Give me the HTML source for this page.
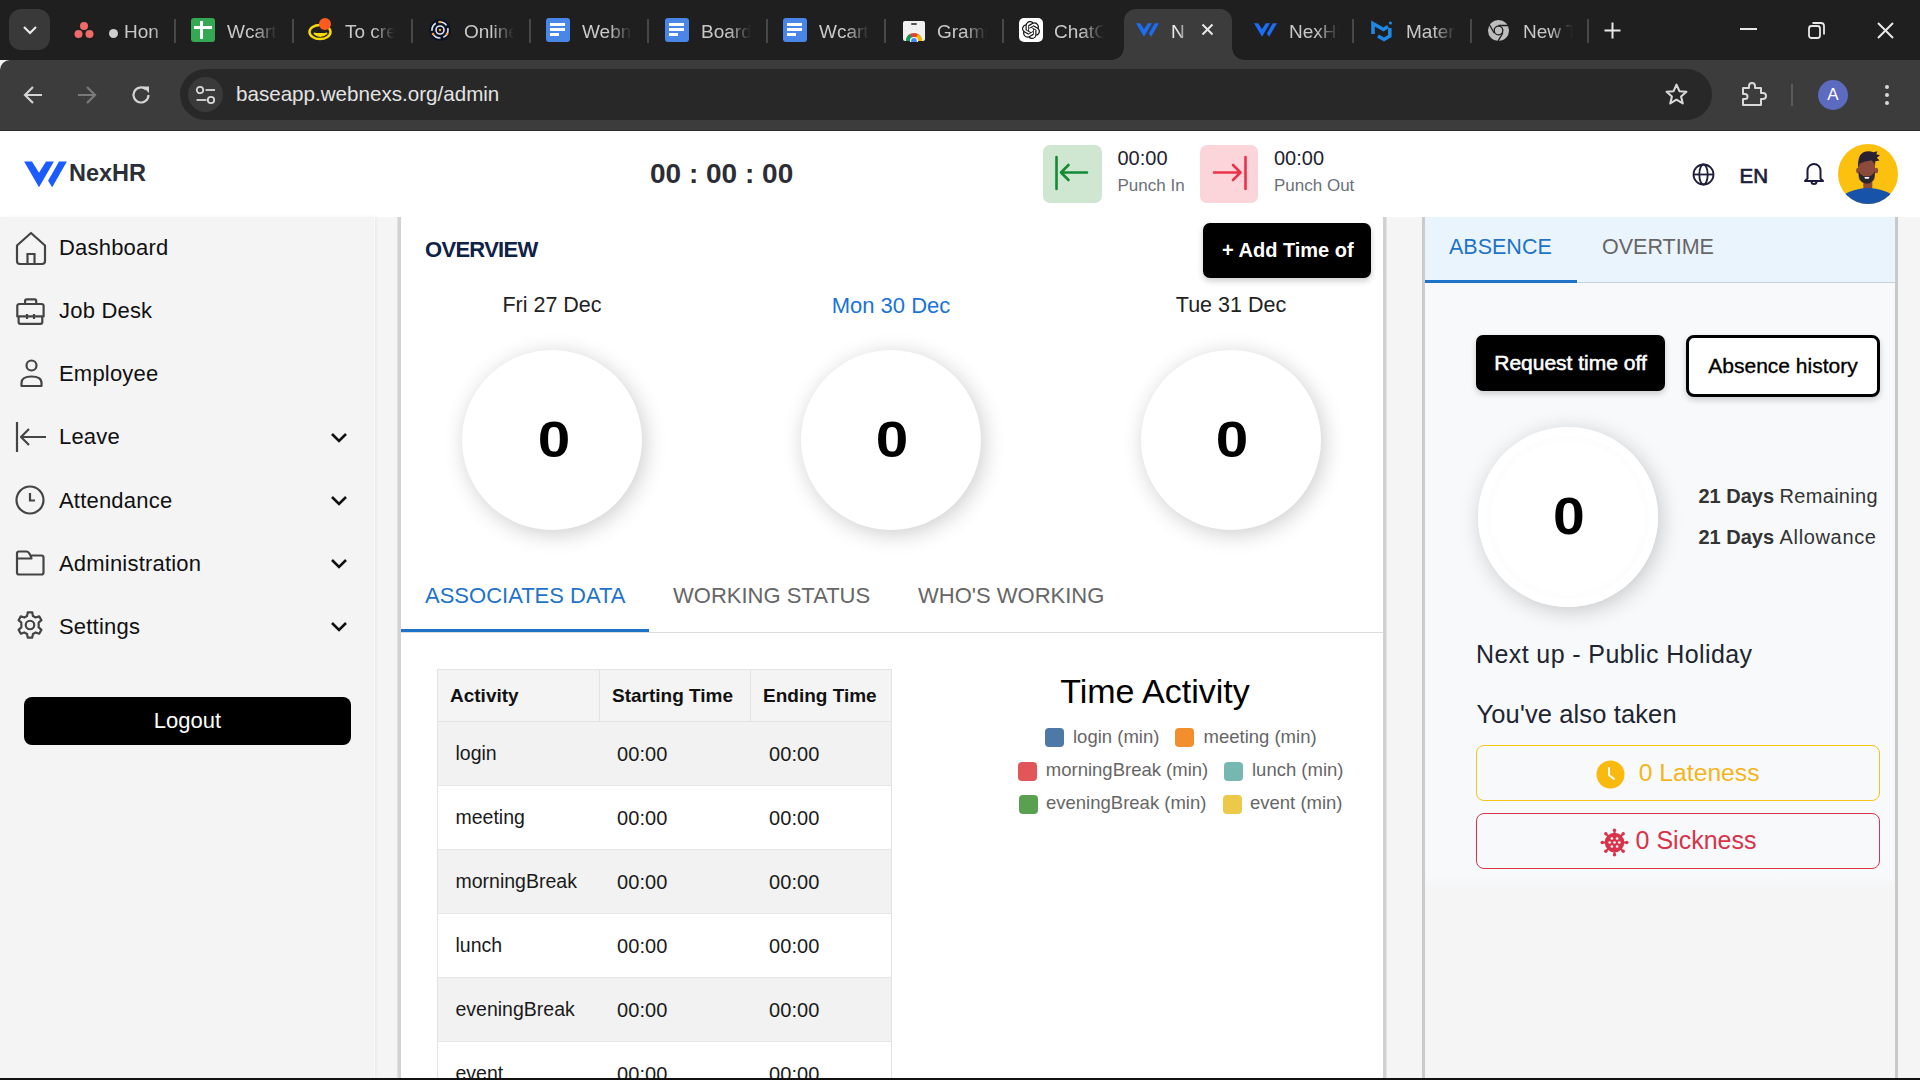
<!DOCTYPE html>
<html><head><meta charset="utf-8">
<style>
*{box-sizing:border-box;margin:0;padding:0}
html,body{width:1920px;height:1080px;overflow:hidden;background:#f5f5f5;font-family:"Liberation Sans",sans-serif}
.abs{position:absolute}
#tabstrip{position:absolute;left:0;top:0;width:1920px;height:60px;background:#1f1f1f}
#toolbar{position:absolute;left:0;top:60px;width:1920px;height:71px;background:#3c3c3c;border-top-left-radius:10px;border-bottom:1px solid #2a2a2a}
.tabt{position:absolute;top:20px;font-size:19px;color:#c8c8c8;white-space:nowrap;overflow:hidden;line-height:24px;-webkit-mask-image:linear-gradient(90deg,#000 55%,transparent 100%)}
.sep{position:absolute;top:19px;width:2px;height:24px;background:#474747}
.fav{position:absolute;top:19px;width:22px;height:22px}
#omni{position:absolute;left:180px;top:69px;width:1532px;height:51px;background:#282828;border-radius:26px}
#app{position:absolute;left:0;top:131px;width:1920px;height:949px}
#header{position:absolute;left:0;top:0;width:1920px;height:86px;background:#fff}
#sidebar{position:absolute;left:0;top:86px;width:375px;height:863px;background:#f4f4f4}
.nav{position:absolute;left:0;height:40px;width:375px}
.nav .t{position:absolute;left:59px;top:6px;font-size:22px;color:#111;line-height:28px}
.nav svg{position:absolute;left:14px;top:4px}
.nav .chev{position:absolute;left:328px;top:10px}
#main{position:absolute;left:400px;top:86px;width:985px;height:863px;background:#fff;border-left:1px solid #ddd;border-right:2px solid #ccc}
#rpanel{position:absolute;left:1423px;top:86px;width:474px;height:863px;background:#f7f9fa;border-left:3px solid #c9c9c9;border-right:3px solid #c9c9c9}
.doc{top:18px;width:24px;height:24px;background:#4a86e8;border-radius:3px;background-image:linear-gradient(#fff,#fff),linear-gradient(#fff,#fff),linear-gradient(#fff,#fff);background-size:15px 3px,15px 3px,9px 3px;background-position:4px 5px,4px 10px,4px 15px;background-repeat:no-repeat}
.tx{position:absolute;white-space:nowrap;line-height:1}
.nv{left:59px;font-size:22px;color:#111;letter-spacing:0.2px}
.chev{left:330px}
.circ{position:absolute;width:180px;height:180px;border-radius:50%;background:#fff;box-shadow:3px 4px 22px rgba(0,0,0,0.2)}
.big0{width:200px;text-align:center;top:414.5px;font-size:50px;font-weight:bold;color:#000;transform:scaleX(1.17)}
.th{top:685.8px;font-size:19px;font-weight:bold;color:#111}
.td{font-size:19.5px;color:#1a1a1a}
.tm{font-size:20px;letter-spacing:0.1px}
.lg{position:absolute;width:19px;height:19px;border-radius:4px}
.lt{font-size:18.5px;color:#666;margin-top:1px}
#header{position:absolute;left:0;top:131px;width:1920px;height:86px;background:#fff}
#bottombar{position:absolute;left:0;top:1078px;width:1920px;height:2px;background:#111}
</style></head><body>
<div id="tabstrip">
  <div class="abs" style="left:9px;top:9px;width:41px;height:41px;background:#393939;border-radius:12px"></div>
  <svg class="abs" style="left:22px;top:23px" width="16" height="14" viewBox="0 0 16 14"><path d="M2 4 L8 10 L14 4" fill="none" stroke="#e8e8e8" stroke-width="2.2"/></svg>
  <!-- tab1 asana -->
  <svg class="abs" style="left:74px;top:21px" width="20" height="18" viewBox="0 0 20 18"><circle cx="10" cy="5" r="4" fill="#f06a6a"/><circle cx="4.5" cy="13" r="4" fill="#f06a6a"/><circle cx="15.5" cy="13" r="4" fill="#f06a6a"/></svg>
  <div class="abs" style="left:109px;top:29px;width:9px;height:9px;border-radius:50%;background:#cfcfcf"></div>
  <div class="tabt" style="left:124px;width:50px">Hon</div>
  <div class="sep" style="left:174px"></div>
  <!-- tab2 sheets -->
  <div class="abs" style="left:191px;top:18px;width:24px;height:24px;background:#34a853;border-radius:3px"></div>
  <div class="abs" style="left:194px;top:26px;width:18px;height:3px;background:#fff"></div>
  <div class="abs" style="left:200px;top:21px;width:3px;height:18px;background:#fff"></div>
  <div class="tabt" style="left:227px;width:50px">Wcart</div>
  <div class="sep" style="left:292px"></div>
  <!-- tab3 -->
  <svg class="abs" style="left:308px;top:17px" width="27" height="24" viewBox="0 0 27 24"><ellipse cx="12" cy="15" rx="10.5" ry="7" fill="none" stroke="#f5d90a" stroke-width="2.5"/><path d="M6 16 Q12 22 19 16" fill="#f5d90a" stroke="#f5d90a" stroke-width="2"/><circle cx="17" cy="7" r="6" fill="#ff5a1f"/></svg>
  <div class="tabt" style="left:345px;width:50px">To cre</div>
  <div class="sep" style="left:411px"></div>
  <!-- tab4 -->
  <svg class="abs" style="left:428px;top:18px" width="24" height="24" viewBox="0 0 24 24"><circle cx="12" cy="12" r="11" fill="#0e1424"/><circle cx="12" cy="12" r="8" fill="none" stroke="#dfe6f5" stroke-width="1.6" stroke-dasharray="9 3"/><circle cx="12" cy="12" r="4" fill="none" stroke="#dfe6f5" stroke-width="1.6"/><circle cx="12" cy="12" r="1.3" fill="#f29b38"/><circle cx="12" cy="4" r="1.3" fill="#f29b38"/><circle cx="5" cy="16" r="1.3" fill="#f29b38"/><circle cx="19" cy="16" r="1.3" fill="#f29b38"/></svg>
  <div class="tabt" style="left:464px;width:50px">Online</div>
  <div class="sep" style="left:529px"></div>
  <!-- tab5 docs -->
  <div class="abs doc" style="left:546px"></div>
  <div class="tabt" style="left:582px;width:50px">Webnexs</div>
  <div class="sep" style="left:647px"></div>
  <div class="abs doc" style="left:665px"></div>
  <div class="tabt" style="left:701px;width:50px">Board</div>
  <div class="sep" style="left:766px"></div>
  <div class="abs doc" style="left:783px"></div>
  <div class="tabt" style="left:819px;width:50px">Wcart</div>
  <div class="sep" style="left:884px"></div>
  <!-- tab8 web store -->
  <svg class="abs" style="left:902px;top:18px" width="24" height="24" viewBox="0 0 24 24"><rect x="1" y="3" width="22" height="20" rx="2" fill="#f1f1f1"/><rect x="9" y="5" width="6" height="2" rx="1" fill="#555"/><path d="M4 23 A8 8 0 0 1 20 23 Z" fill="#db4437"/><path d="M4 23 A8 8 0 0 1 8 16 L12 23Z" fill="#0f9d58"/><path d="M20 23 A8 8 0 0 0 16 16 L12 23Z" fill="#f4b400"/><circle cx="12" cy="23" r="3.5" fill="#4285f4" stroke="#fff" stroke-width="1.2"/></svg>
  <div class="tabt" style="left:937px;width:50px">Grammarly</div>
  <div class="sep" style="left:1002px"></div>
  <!-- tab9 chatgpt -->
  <div class="abs" style="left:1019px;top:18px;width:24px;height:24px;background:#fff;border-radius:5px"></div>
  <svg class="abs" style="left:1022px;top:21px" width="18" height="18" viewBox="0 0 24 24"><path d="M22.2819 9.8211a5.9847 5.9847 0 0 0-.5157-4.9108 6.0462 6.0462 0 0 0-6.5098-2.9A6.0651 6.0651 0 0 0 4.9807 4.1818a5.9847 5.9847 0 0 0-3.9977 2.9 6.0462 6.0462 0 0 0 .7427 7.0966 5.98 5.98 0 0 0 .511 4.9107 6.051 6.051 0 0 0 6.5146 2.9001A5.9847 5.9847 0 0 0 13.2599 24a6.0557 6.0557 0 0 0 5.7718-4.2058 5.9894 5.9894 0 0 0 3.9977-2.9001 6.0557 6.0557 0 0 0-.7475-7.0729zm-9.022 12.6081a4.4755 4.4755 0 0 1-2.8764-1.0408l.1419-.0804 4.7783-2.7582a.7948.7948 0 0 0 .3927-.6813v-6.7369l2.02 1.1686a.071.071 0 0 1 .038.052v5.5826a4.504 4.504 0 0 1-4.4945 4.4944zm-9.6607-4.1254a4.4708 4.4708 0 0 1-.5346-3.0137l.142.0852 4.783 2.7582a.7712.7712 0 0 0 .7806 0l5.8428-3.3685v2.3324a.0804.0804 0 0 1-.0332.0615L9.74 19.9502a4.4992 4.4992 0 0 1-6.1408-1.6464zM2.3408 7.8956a4.485 4.485 0 0 1 2.3655-1.9728V11.6a.7664.7664 0 0 0 .3879.6765l5.8144 3.3543-2.0201 1.1685a.0757.0757 0 0 1-.071 0l-4.8303-2.7865A4.504 4.504 0 0 1 2.3408 7.872zm16.5963 3.8558L13.1038 8.364 15.1192 7.2a.0757.0757 0 0 1 .071 0l4.8303 2.7913a4.4944 4.4944 0 0 1-.6765 8.1042v-5.6772a.79.79 0 0 0-.407-.667zm2.0107-3.0231l-.142-.0852-4.7735-2.7818a.7759.7759 0 0 0-.7854 0L9.409 9.2297V6.8974a.0662.0662 0 0 1 .0284-.0615l4.8303-2.7866a4.4992 4.4992 0 0 1 6.6802 4.66zM8.3065 12.863l-2.02-1.1638a.0804.0804 0 0 1-.038-.0567V6.0742a4.4992 4.4992 0 0 1 7.3757-3.4537l-.142.0805L8.704 5.459a.7948.7948 0 0 0-.3927.6813zm1.0976-2.3654l2.602-1.4998 2.6069 1.4998v2.9994l-2.5974 1.4997-2.6067-1.4997Z" fill="#111"/></svg>
  <div class="tabt" style="left:1054px;width:50px">ChatGPT</div>
  <!-- active tab -->
  <div class="abs" style="left:1124px;top:9px;width:108px;height:51px;background:#3c3c3c;border-radius:12px 12px 0 0"></div>
  <div class="abs" style="left:1112px;top:48px;width:12px;height:12px;background:radial-gradient(circle at 0 0,#1f1f1f 11.5px,#3c3c3c 12px)"></div>
  <div class="abs" style="left:1232px;top:48px;width:12px;height:12px;background:radial-gradient(circle at 100% 0,#1f1f1f 11.5px,#3c3c3c 12px)"></div>
  <svg class="abs wlogo" style="left:1136.4px;top:23.3px" width="23" height="14" viewBox="4 6.5 43 25.7"><path d="M4.1 6.5 L12 6.5 L19 17.8 L26 6.5 L33.9 6.5 L19 32.2 Z" fill="#1b6ef3"/><path d="M39 6.5 L46.9 6.5 L32.2 32.2 L28.1 25.7 Z" fill="#1b6ef3"/></svg>
  <div class="tabt" style="left:1171px;width:16px;color:#e8e8e8">N</div>
  <svg class="abs" style="left:1201px;top:23px" width="13" height="13" viewBox="0 0 13 13"><path d="M1.5 1.5 L11.5 11.5 M11.5 1.5 L1.5 11.5" stroke="#e8e8e8" stroke-width="2"/></svg>
  <!-- tab11 -->
  <svg class="abs wlogo" style="left:1253.5px;top:23.3px" width="23" height="14" viewBox="4 6.5 43 25.7"><path d="M4.1 6.5 L12 6.5 L19 17.8 L26 6.5 L33.9 6.5 L19 32.2 Z" fill="#1b6ef3"/><path d="M39 6.5 L46.9 6.5 L32.2 32.2 L28.1 25.7 Z" fill="#1b6ef3"/></svg>
  <div class="tabt" style="left:1289px;width:50px">NexHR</div>
  <div class="sep" style="left:1352px"></div>
  <!-- tab12 MUI -->
  <svg class="abs" style="left:1368px;top:18px" width="26" height="24" viewBox="0 0 26 24"><path d="M5 16 V5.5 L15.5 11.5 L20 8.5 M21.8 10 V18 L16 21.5 L10 18" fill="none" stroke="#1e88e5" stroke-width="3.6" stroke-linejoin="miter"/><circle cx="22.4" cy="5" r="1.6" fill="#1e88e5"/></svg>
  <div class="tabt" style="left:1406px;width:50px">Material</div>
  <div class="sep" style="left:1470px"></div>
  <!-- tab13 chrome -->
  <svg class="abs" style="left:1487px;top:19px" width="23" height="23" viewBox="0 0 24 24"><circle cx="12" cy="12" r="11" fill="#bdbdbd"/><circle cx="12" cy="12" r="5.2" fill="#1f1f1f"/><circle cx="12" cy="12" r="3.8" fill="#bdbdbd"/><path d="M12 6.8 H22 M7.5 14.6 L2.5 6 M16.5 14.6 L11.5 23" stroke="#1f1f1f" stroke-width="1.4"/></svg>
  <div class="tabt" style="left:1523px;width:50px">New Tab</div>
  <div class="sep" style="left:1587px"></div>
  <svg class="abs" style="left:1604px;top:22px" width="17" height="17" viewBox="0 0 17 17"><path d="M8.5 0.5 V16.5 M0.5 8.5 H16.5" stroke="#e8e8e8" stroke-width="2"/></svg>
  <div class="abs" style="left:1740px;top:28px;width:17px;height:2px;background:#e8e8e8"></div>
  <svg class="abs" style="left:1808px;top:22px" width="17" height="17" viewBox="0 0 17 17"><rect x="1" y="4" width="11" height="12" rx="2.5" fill="none" stroke="#e8e8e8" stroke-width="1.8"/><path d="M4.5 1 H13 Q16 1 16 4 V12.5" fill="none" stroke="#e8e8e8" stroke-width="1.8"/></svg>
  <svg class="abs" style="left:1877px;top:22px" width="17" height="17" viewBox="0 0 17 17"><path d="M1 1 L16 16 M16 1 L1 16" stroke="#e8e8e8" stroke-width="2"/></svg>
</div>
<div id="toolbar">
  <svg class="abs" style="left:23px;top:25px" width="20" height="20" viewBox="0 0 20 20"><path d="M19 10 H2.5 M10 2 L2 10 L10 18" fill="none" stroke="#d4d4d4" stroke-width="2.2"/></svg>
  <svg class="abs" style="left:77px;top:25px" width="20" height="20" viewBox="0 0 20 20"><path d="M1 10 H17.5 M10 2 L18 10 L10 18" fill="none" stroke="#7a7a7a" stroke-width="2.2"/></svg>
  <svg class="abs" style="left:131px;top:25px" width="20" height="20" viewBox="0 0 20 20"><path d="M17.5 10 A7.5 7.5 0 1 1 15 4.4" fill="none" stroke="#d4d4d4" stroke-width="2.2"/><path d="M11.5 1.5 H18 V8 Z" fill="#d4d4d4"/></svg>
</div>
<div id="omni">
  <div class="abs" style="left:8px;top:8px;width:35px;height:35px;border-radius:50%;background:#3a3a3a"></div>
  <svg class="abs" style="left:15px;top:16px" width="22" height="20" viewBox="0 0 22 20"><circle cx="5" cy="5" r="3.2" fill="none" stroke="#d8d8d8" stroke-width="1.8"/><path d="M10.5 5 H20" stroke="#d8d8d8" stroke-width="1.8"/><circle cx="16" cy="15" r="3.2" fill="none" stroke="#d8d8d8" stroke-width="1.8"/><path d="M1.5 15 H11.5" stroke="#d8d8d8" stroke-width="1.8"/></svg>
  <div class="abs" style="left:56px;top:12px;font-size:20.6px;color:#e3e3e3;line-height:26px;white-space:nowrap">baseapp.webnexs.org/admin</div>
  <svg class="abs" style="left:1484px;top:13px" width="25" height="25" viewBox="0 0 24 24"><path d="M12 2.5 L14.8 8.8 L21.5 9.4 L16.4 13.9 L18 20.6 L12 17 L6 20.6 L7.6 13.9 L2.5 9.4 L9.2 8.8 Z" fill="none" stroke="#d8d8d8" stroke-width="2" stroke-linejoin="round"/></svg>
</div>
<svg class="abs" style="left:1741px;top:81px" width="27" height="26" viewBox="0 0 27 26"><path d="M2 7 H8 V5 A3 3 0 0 1 14 5 V7 H20 V12 H22 A3 3 0 0 1 22 18 H20 V24 H2 V18 H4 A2.5 2.5 0 0 0 4 13 H2 Z" fill="none" stroke="#d8d8d8" stroke-width="2" stroke-linejoin="round"/></svg>
<div class="abs" style="left:1791px;top:84px;width:2px;height:22px;background:#5a5a5a"></div>
<div class="abs" style="left:1818px;top:80px;width:30px;height:30px;border-radius:50%;background:#5c6bc0;color:#fff;font-size:17px;text-align:center;line-height:30px">A</div>
<div class="abs" style="left:1885px;top:85px;width:4px;height:4px;border-radius:50%;background:#d8d8d8"></div>
<div class="abs" style="left:1885px;top:93px;width:4px;height:4px;border-radius:50%;background:#d8d8d8"></div>
<div class="abs" style="left:1885px;top:101px;width:4px;height:4px;border-radius:50%;background:#d8d8d8"></div>
<div id="header"></div>
<!-- logo -->
<svg class="abs" style="left:20px;top:155px" width="50" height="37" viewBox="0 0 50 37"><path d="M4.1 6.5 L12 6.5 L19 17.8 L26 6.5 L33.9 6.5 L19 32.2 Z" fill="#1a5cff"/><path d="M39 6.5 L46.9 6.5 L32.2 32.2 L28.1 25.7 Z" fill="#1a5cff"/></svg>
<div class="tx" style="left:69px;top:162px;font-size:23.5px;font-weight:bold;color:#2b2f38">NexHR</div>
<div class="tx" style="left:650px;top:160.4px;font-size:28px;font-weight:bold;color:#2d2d35">00 : 00 : 00</div>
<!-- punch in -->
<div class="abs" style="left:1043px;top:145px;width:59px;height:58px;background:#cfe6d1;border-radius:7px"></div>
<svg class="abs" style="left:1043px;top:145px" width="59" height="58" viewBox="0 0 59 58"><path d="M13.5 12 V44 M18 27.5 H44 M25.5 20 L18 27.5 L25.5 35" fill="none" stroke="#138a36" stroke-width="2.6" stroke-linecap="round" stroke-linejoin="round"/></svg>
<div class="tx" style="left:1117.5px;top:147.7px;font-size:20px;color:#1f2330">00:00</div>
<div class="tx" style="left:1117.5px;top:177px;font-size:17px;color:#6b6f78">Punch In</div>
<!-- punch out -->
<div class="abs" style="left:1200px;top:145px;width:58px;height:58px;background:#fcd5da;border-radius:7px"></div>
<svg class="abs" style="left:1200px;top:145px" width="58" height="58" viewBox="0 0 58 58"><path d="M45.5 12 V44 M14 27.5 H40.5 M33 20 L40.5 27.5 L33 35" fill="none" stroke="#e8334a" stroke-width="2.6" stroke-linecap="round" stroke-linejoin="round"/></svg>
<div class="tx" style="left:1274px;top:147.7px;font-size:20px;color:#1f2330">00:00</div>
<div class="tx" style="left:1274px;top:177px;font-size:17px;color:#6b6f78">Punch Out</div>
<!-- globe, EN, bell, avatar -->
<svg class="abs" style="left:1692px;top:163px" width="23" height="23" viewBox="0 0 23 23"><g fill="none" stroke="#1e1e3c" stroke-width="1.8"><circle cx="11.5" cy="11.5" r="10"/><ellipse cx="11.5" cy="11.5" rx="4.2" ry="10"/><path d="M1.5 11.5 H21.5"/></g></svg>
<div class="tx" style="left:1739.6px;top:165.5px;font-size:20.5px;-webkit-text-stroke:0.7px #1d1d3a;color:#1d1d3a">EN</div>
<svg class="abs" style="left:1803px;top:161px" width="22" height="24" viewBox="0 0 22 24"><path d="M4.5 17.5 V9.5 A6.5 6.5 0 0 1 17.5 9.5 V17.5 L20 20 H2 Z" fill="none" stroke="#1c1a3a" stroke-width="2" stroke-linejoin="round"/><path d="M8.5 20.5 A2.5 2.5 0 0 0 13.5 20.5" fill="none" stroke="#1c1a3a" stroke-width="2"/></svg>
<svg class="abs" style="left:1838px;top:144px" width="60" height="60" viewBox="0 0 60 60"><defs><clipPath id="avc"><circle cx="30" cy="30" r="30"/></clipPath></defs><g clip-path="url(#avc)"><rect width="60" height="60" fill="#fcc10f"/><rect x="25.3" y="36" width="9" height="9" fill="#8b4a3a"/><path d="M4 60 V51.5 Q16.5 44 30 44 Q43.5 44 56 51.5 V60 Z" fill="#1753a8"/><ellipse cx="20" cy="26.5" rx="1.9" ry="2.7" fill="#8b4a3a"/><ellipse cx="38.3" cy="26.5" rx="1.9" ry="2.7" fill="#8b4a3a"/><path d="M20.5 22 Q20.5 15.5 28.7 15.5 Q37 15.5 37 22 V32 Q37 39 28.7 39 Q20.5 39 20.5 32 Z" fill="#8b4a3a"/><path d="M20.6 27.5 Q21 39.6 28.8 39.6 Q36.6 39.6 36.9 27.5 L35 30 Q33 32.6 28.8 32.6 Q24.5 32.6 22.5 30 Z" fill="#2a2630"/><path d="M26.3 33 H31.5 L30.7 34.8 H27.1 Z" fill="#fff"/><path d="M20.3 24.5 Q19 12 25 8.5 Q30 6 35.5 8.2 L39.5 7.2 L38.3 10.3 L42 11.3 L38.8 13.8 L41.5 16.5 L37.3 17.3 L37 22 Q36 17.5 33 16.5 Q27 16.8 21.8 19.5 Z" fill="#2a2233"/></g></svg>
<!-- sidebar -->
<div class="abs" style="left:0;top:217px;width:375px;height:863px;background:#f4f4f4;border-right:1px solid #fafafa;box-shadow:1px 0 3px rgba(0,0,0,0.06)"></div>
<svg class="abs" style="left:14px;top:230px" width="34" height="36" viewBox="0 0 34 36"><path d="M3 15.5 L17 3 L31 15.5 V31 Q31 34 28 34 H6 Q3 34 3 31 Z" fill="none" stroke="#444" stroke-width="2.2" stroke-linejoin="round"/><path d="M13.5 34 V24 H20.5 V34" fill="none" stroke="#444" stroke-width="2.2"/></svg>
<div class="tx nv" style="top:237.0px">Dashboard</div>
<svg class="abs" style="left:15px;top:297px" width="32" height="30" viewBox="0 0 32 30"><path d="M4.5 7 H26.5 Q28.6 7 28.6 9 V19.4 H2.3 V9 Q2.3 7 4.5 7 Z M3.6 19.4 V25 Q3.6 26.8 5.4 26.8 H25.5 Q27.3 26.8 27.3 25 V19.4 M10.1 7 V3.8 Q10.1 2.3 11.6 2.3 H19.7 Q21.2 2.3 21.2 3.8 V7 M12 17 V22 M19 17 V22" fill="none" stroke="#444" stroke-width="2.2" stroke-linejoin="round"/></svg>
<div class="tx nv" style="top:300.0px">Job Desk</div>
<svg class="abs" style="left:18px;top:358px" width="28" height="31" viewBox="0 0 28 31"><circle cx="13.5" cy="7.5" r="5" fill="none" stroke="#444" stroke-width="2.2"/><path d="M3.5 28 V25 Q3.5 18.5 13.5 18.5 Q23.5 18.5 23.5 25 V28 Z" fill="none" stroke="#444" stroke-width="2.2" stroke-linejoin="round"/></svg>
<div class="tx nv" style="top:363.0px">Employee</div>
<svg class="abs" style="left:14px;top:420px" width="34" height="34" viewBox="0 0 34 34"><path d="M3 2 V32 M7 17 H32 M15 9 L7 17 L15 25" fill="none" stroke="#444" stroke-width="2.2" stroke-linejoin="round"/></svg>
<div class="tx nv" style="top:425.8px">Leave</div>
<svg class="abs" style="left:14px;top:484px" width="32" height="32" viewBox="0 0 32 32"><circle cx="16" cy="16" r="13.5" fill="none" stroke="#444" stroke-width="2.2"/><path d="M16 9 V16.5 H21" fill="none" stroke="#444" stroke-width="2.2"/></svg>
<div class="tx nv" style="top:489.8px">Attendance</div>
<svg class="abs" style="left:15px;top:549px" width="32" height="28" viewBox="0 0 32 28"><path d="M2 4.5 Q2 2.5 4 2.5 H11.5 Q13 2.5 14 4 L15.5 6.5 H26.5 Q28.5 6.5 28.5 8.5 V23.5 Q28.5 25.5 26.5 25.5 H4 Q2 25.5 2 23.5 Z M2 9.5 H16.5 L15.5 6.5" fill="none" stroke="#444" stroke-width="2.2" stroke-linejoin="round"/></svg>
<div class="tx nv" style="top:552.8px">Administration</div>
<svg class="abs" style="left:14px;top:609px" width="32" height="32" viewBox="0 0 24 24"><path d="M10.3 2.5 H13.7 L14.2 5.2 L16.3 6.4 L18.9 5.5 L20.6 8.4 L18.5 10.2 V13.8 L20.6 15.6 L18.9 18.5 L16.3 17.6 L14.2 18.8 L13.7 21.5 H10.3 L9.8 18.8 L7.7 17.6 L5.1 18.5 L3.4 15.6 L5.5 13.8 V10.2 L3.4 8.4 L5.1 5.5 L7.7 6.4 L9.8 5.2 Z" fill="none" stroke="#444" stroke-width="1.65" stroke-linejoin="round"/><circle cx="12" cy="12" r="3.2" fill="none" stroke="#444" stroke-width="1.65"/></svg>
<div class="tx nv" style="top:615.8px">Settings</div>
<svg class="abs chev" style="top:432px" width="18" height="11" viewBox="0 0 18 11"><path d="M2 2 L9 9 L16 2" fill="none" stroke="#111" stroke-width="2.6"/></svg>
<svg class="abs chev" style="top:495px" width="18" height="11" viewBox="0 0 18 11"><path d="M2 2 L9 9 L16 2" fill="none" stroke="#111" stroke-width="2.6"/></svg>
<svg class="abs chev" style="top:558px" width="18" height="11" viewBox="0 0 18 11"><path d="M2 2 L9 9 L16 2" fill="none" stroke="#111" stroke-width="2.6"/></svg>
<svg class="abs chev" style="top:621px" width="18" height="11" viewBox="0 0 18 11"><path d="M2 2 L9 9 L16 2" fill="none" stroke="#111" stroke-width="2.6"/></svg>
<div class="abs" style="left:24px;top:697px;width:327px;height:48px;background:#000;border-radius:8px"></div>
<div class="tx" style="left:24px;width:327px;text-align:center;top:710.4px;font-size:22px;color:#fff">Logout</div>
<!-- main card -->
<div class="abs" style="left:397px;top:217px;width:4px;height:863px;background:linear-gradient(90deg,#e6e6e6,#d0d0d0 50%,#d3d3d3)"></div>
<div class="abs" style="left:401px;top:217px;width:982px;height:863px;background:#fff"></div>
<div class="abs" style="left:1383px;top:217px;width:4px;height:863px;background:linear-gradient(90deg,#d2d2d2,#cfcfcf 60%,#eeeeee)"></div>
<div class="tx" style="left:425px;top:238.6px;font-size:22px;letter-spacing:-0.7px;font-weight:bold;color:#0e2146">OVERVIEW</div>
<div class="abs" style="left:1203px;top:223px;width:168px;height:55px;background:#000;border-radius:7px;box-shadow:0 3px 6px rgba(0,0,0,0.2)"></div>
<div class="tx" style="left:1222px;top:240.1px;font-size:20px;font-weight:bold;color:#fff">+ Add Time of</div>
<div class="tx" style="left:452px;width:200px;text-align:center;top:295.2px;font-size:21.5px;color:#222">Fri 27 Dec</div>
<div class="tx" style="left:791px;width:200px;text-align:center;top:295.2px;font-size:22px;color:#1a73d9">Mon 30 Dec</div>
<div class="tx" style="left:1131px;width:200px;text-align:center;top:295.2px;font-size:21.5px;color:#222">Tue 31 Dec</div>
<div class="circ" style="left:462px;top:350px"></div>
<div class="circ" style="left:801px;top:350px"></div>
<div class="circ" style="left:1141px;top:350px"></div>
<div class="tx big0" style="left:453.5px">0</div>
<div class="tx big0" style="left:792px">0</div>
<div class="tx big0" style="left:1132px">0</div>
<!-- tabs -->
<div class="tx" style="left:425px;top:584.9px;font-size:22px;color:#1e73c8">ASSOCIATES DATA</div>
<div class="tx" style="left:673px;top:584.9px;font-size:22px;color:#666">WORKING STATUS</div>
<div class="tx" style="left:918px;top:584.9px;font-size:22px;color:#666">WHO'S WORKING</div>
<div class="abs" style="left:401px;top:632px;width:982px;height:1px;background:#dcdcdc"></div>
<div class="abs" style="left:401px;top:629px;width:248px;height:3px;background:#1e73c8"></div>
<!-- table -->
<div class="abs" style="left:437px;top:669px;width:455px;height:420px;border:1px solid #e3e3e3;overflow:hidden">
  <div class="abs" style="left:0;top:0;width:453px;height:52px;background:#f4f4f4;border-bottom:1px solid #e3e3e3"></div>
  <div class="abs" style="left:0;top:52px;width:453px;height:64px;background:#f2f2f2;border-bottom:1px solid #e6e6e6"></div>
  <div class="abs" style="left:0;top:116px;width:453px;height:64px;background:#fff;border-bottom:1px solid #e6e6e6"></div>
  <div class="abs" style="left:0;top:180px;width:453px;height:64px;background:#f2f2f2;border-bottom:1px solid #e6e6e6"></div>
  <div class="abs" style="left:0;top:244px;width:453px;height:64px;background:#fff;border-bottom:1px solid #e6e6e6"></div>
  <div class="abs" style="left:0;top:308px;width:453px;height:64px;background:#f2f2f2;border-bottom:1px solid #e6e6e6"></div>
  <div class="abs" style="left:0;top:372px;width:453px;height:64px;background:#fff"></div>
  <div class="abs" style="left:161px;top:0;width:1px;height:52px;background:#e3e3e3"></div>
  <div class="abs" style="left:312px;top:0;width:1px;height:52px;background:#e3e3e3"></div>
</div>
<div class="tx th" style="left:450px">Activity</div>
<div class="tx th" style="left:612px">Starting Time</div>
<div class="tx th" style="left:763px">Ending Time</div>
<div class="tx td" style="left:455.5px;top:743.9px">login</div><div class="tx td tm" style="left:617px;top:743.9px">00:00</div><div class="tx td tm" style="left:769px;top:743.9px">00:00</div>
<div class="tx td" style="left:455.5px;top:807.9px">meeting</div><div class="tx td tm" style="left:617px;top:807.9px">00:00</div><div class="tx td tm" style="left:769px;top:807.9px">00:00</div>
<div class="tx td" style="left:455.5px;top:871.9px">morningBreak</div><div class="tx td tm" style="left:617px;top:871.9px">00:00</div><div class="tx td tm" style="left:769px;top:871.9px">00:00</div>
<div class="tx td" style="left:455.5px;top:935.9px">lunch</div><div class="tx td tm" style="left:617px;top:935.9px">00:00</div><div class="tx td tm" style="left:769px;top:935.9px">00:00</div>
<div class="tx td" style="left:455.5px;top:999.9px">eveningBreak</div><div class="tx td tm" style="left:617px;top:999.9px">00:00</div><div class="tx td tm" style="left:769px;top:999.9px">00:00</div>
<div class="tx td" style="left:455.5px;top:1063.9px">event</div><div class="tx td tm" style="left:617px;top:1063.9px">00:00</div><div class="tx td tm" style="left:769px;top:1063.9px">00:00</div>
<!-- time activity -->
<div class="tx" style="left:1005px;width:300px;text-align:center;top:674px;font-size:34px;color:#000">Time Activity</div>
<div class="lg" style="left:1045px;top:728px;background:#4e79a7"></div><div class="tx lt" style="left:1073px;top:726.6px">login (min)</div>
<div class="lg" style="left:1175px;top:728px;background:#f28e2c"></div><div class="tx lt" style="left:1203.5px;top:726.6px">meeting (min)</div>
<div class="lg" style="left:1018px;top:761.5px;background:#e15759"></div><div class="tx lt" style="left:1045.8px;top:759.9px">morningBreak (min)</div>
<div class="lg" style="left:1224px;top:761.5px;background:#76b7b2"></div><div class="tx lt" style="left:1252px;top:759.9px">lunch (min)</div>
<div class="lg" style="left:1018.5px;top:794.5px;background:#59a14f"></div><div class="tx lt" style="left:1046px;top:792.6px">eveningBreak (min)</div>
<div class="lg" style="left:1223px;top:794.5px;background:#edc949"></div><div class="tx lt" style="left:1250px;top:792.6px">event (min)</div>
<!-- right panel -->
<div class="abs" style="left:1422px;top:217px;width:3px;height:863px;background:#cbcbcb"></div>
<div class="abs" style="left:1425px;top:217px;width:470px;height:863px;background:#f5f5f5"></div>
<div class="abs" style="left:1425px;top:217px;width:470px;height:672px;background:linear-gradient(180deg,#f7f9fb 0,#f7f9fb 659px,#f5f5f5 672px)"></div>
<div class="abs" style="left:1425px;top:217px;width:470px;height:66px;background:#eaf4fc;border-bottom:1px solid #c8d4dc"></div>
<div class="abs" style="left:1425px;top:280px;width:152px;height:3px;background:#1e73c8"></div>
<div class="abs" style="left:1895px;top:217px;width:3px;height:863px;background:#c9c9c9"></div>
<div class="tx" style="left:1449px;top:236.5px;font-size:21.5px;color:#1e73c8">ABSENCE</div>
<div class="tx" style="left:1602px;top:236.5px;font-size:21.5px;color:#666">OVERTIME</div>
<div class="abs" style="left:1476px;top:335px;width:189px;height:56px;background:#000;border-radius:7px;box-shadow:0 3px 6px rgba(0,0,0,0.18)"></div>
<div class="tx" style="left:1476px;width:189px;text-align:center;top:352.2px;font-size:21px;-webkit-text-stroke:0.55px #fff;color:#fff">Request time off</div>
<div class="abs" style="left:1686px;top:335px;width:194px;height:62px;background:#fff;border:3px solid #000;border-radius:8px;box-shadow:0 3px 6px rgba(0,0,0,0.18)"></div>
<div class="tx" style="left:1686px;width:194px;text-align:center;top:355.4px;font-size:21px;-webkit-text-stroke:0.35px #000;color:#000">Absence history</div>
<div class="circ" style="left:1478px;top:427px;box-shadow:3px 4px 22px rgba(0,0,0,0.2),inset 0 0 0 9px #fff,inset 0 0 14px 9px rgba(0,0,0,0.025)"></div>
<div class="tx" style="left:1469px;width:200px;text-align:center;top:490.6px;font-size:51px;font-weight:bold;color:#000;transform:scaleX(1.12)">0</div>
<div class="tx" style="left:1698.4px;top:486px;font-size:20px;color:#333"><b>21 Days</b> <span style="letter-spacing:0.3px">Remaining</span></div>
<div class="tx" style="left:1698.4px;top:526.7px;font-size:20px;color:#333"><b>21 Days</b> <span style="letter-spacing:0.65px">Allowance</span></div>
<div class="tx" style="left:1476px;top:641.8px;font-size:25px;letter-spacing:0.4px;color:#1e2530">Next up - Public Holiday</div>
<div class="tx" style="left:1476.5px;top:702.3px;font-size:25.5px;letter-spacing:0.12px;color:#1e2530">You've also taken</div>
<div class="abs" style="left:1476px;top:745px;width:404px;height:56px;border:1.5px solid #f5c518;border-radius:8px"></div>
<svg class="abs" style="left:1596px;top:760px" width="29" height="29" viewBox="0 0 29 29"><circle cx="14.5" cy="14.5" r="14" fill="#f9b90f"/><path d="M13 8 V15 L18 19" fill="none" stroke="#fff" stroke-width="2" stroke-linecap="round"/></svg>
<div class="tx" style="left:1638.75px;top:760.6px;font-size:24.7px;color:#f4b51c">0 Lateness</div>
<div class="abs" style="left:1476px;top:813px;width:404px;height:56px;border:1.5px solid #d9344a;border-radius:8px"></div>
<svg class="abs" style="left:1600px;top:828px" width="29" height="29" viewBox="0 0 29 29"><path d="M14.50 5.50 L14.50 2.20 M20.86 8.14 L23.20 5.80 M23.50 14.50 L26.80 14.50 M20.86 20.86 L23.20 23.20 M14.50 23.50 L14.50 26.80 M8.14 20.86 L5.80 23.20 M5.50 14.50 L2.20 14.50 M8.14 8.14 L5.80 5.80 " stroke="#d8334a" stroke-width="2"/><g fill="#d8334a"><circle cx="14.50" cy="2.20" r="1.7"/><circle cx="23.20" cy="5.80" r="1.7"/><circle cx="26.80" cy="14.50" r="1.7"/><circle cx="23.20" cy="23.20" r="1.7"/><circle cx="14.50" cy="26.80" r="1.7"/><circle cx="5.80" cy="23.20" r="1.7"/><circle cx="2.20" cy="14.50" r="1.7"/><circle cx="5.80" cy="5.80" r="1.7"/></g><circle cx="14.5" cy="14.5" r="9.8" fill="#d8334a"/><g fill="#f7f9fb"><circle cx="11.90" cy="10.50" r="1.35"/><circle cx="17.10" cy="10.50" r="1.35"/><circle cx="9.70" cy="14.50" r="1.35"/><circle cx="14.50" cy="14.50" r="1.35"/><circle cx="19.30" cy="14.50" r="1.35"/><circle cx="11.90" cy="18.50" r="1.35"/><circle cx="17.10" cy="18.50" r="1.35"/></g></svg>
<div class="tx" style="left:1635.6px;top:827.8px;font-size:25px;color:#d8334a">0 Sickness</div>
<div id="bottombar"></div>
</body></html>
